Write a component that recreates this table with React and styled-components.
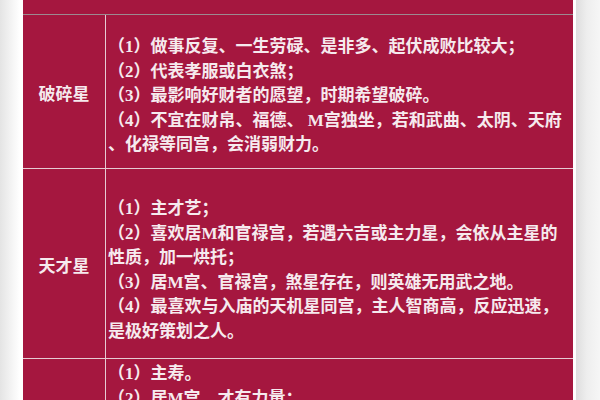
import React from 'react';
import styled, { createGlobalStyle } from 'styled-components';

const rows = [
  {
    name: '破碎星',
    height: 153,
    padTop: 20,
    lines: [
      '（1）做事反复、一生劳碌、是非多、起伏成败比较大；',
      '（2）代表孝服或白衣煞；',
      '（3）最影响好财者的愿望，时期希望破碎。',
      '（4）不宜在财帛、福德、 M宫独坐，若和武曲、太阴、天府',
      '、化禄等同宫，会消弱财力。',
    ],
  },
  {
    name: '天才星',
    height: 189,
    padTop: 28,
    lines: [
      '（1）主才艺；',
      '（2）喜欢居M和官禄宫，若遇六吉或主力星，会依从主星的',
      '性质，加一烘托；',
      '（3）居M宫、官禄宫，煞星存在，则英雄无用武之地。',
      '（4）最喜欢与入庙的天机星同宫，主人智商高，反应迅速，',
      '是极好策划之人。',
    ],
  },
  {
    name: '',
    height: 60,
    padTop: 3,
    lines: ['（1）主寿。', '（2）居M宫，才有力量；'],
  },
];

const App = () => (
  <>
    <GlobalStyle />
    <Page>
      <LeftShade />
      <Table>
        <TopBand />
        {rows.map((row) => (
          <Row key={row.lines[0]} $height={row.height}>
            <Label>{row.name}</Label>
            <Content $padTop={row.padTop}>
              {row.lines.map((line) => (
                <Line key={line}>{line}</Line>
              ))}
            </Content>
          </Row>
        ))}
      </Table>
      <RightShade />
    </Page>
  </>
);

export default App;

const GlobalStyle = createGlobalStyle`
  html, body {
    margin: 0;
    padding: 0;
    background: #ffffff;
  }
`;

const Page = styled.div`
  width: 600px;
  height: 400px;
  overflow: hidden;
  display: flex;
  font-family: "Liberation Serif", "Noto Sans CJK SC", serif;
  font-weight: 700;
  font-size: 17px;
  color: #f6eaee;
`;

const LeftShade = styled.div`
  width: 23px;
  flex-shrink: 0;
  background: linear-gradient(to right, #e4e4e4 0%, #f4f4f4 50%, #ffffff 85%);
`;

const RightShade = styled.div`
  width: 27px;
  flex-shrink: 0;
  border-left: 3px solid #ffffff;
  background: linear-gradient(to right, #dedede 0%, #eeeeee 40%, #f8f8f8 100%);
`;

const Table = styled.div`
  width: 550px;
  flex-shrink: 0;
  display: flex;
  flex-direction: column;
  background: #a5173f;
`;

const TopBand = styled.div`
  height: 14px;
  flex-shrink: 0;
  border-bottom: 1px solid #9c8a90;
`;

const Row = styled.div`
  display: grid;
  grid-template-columns: 83px 1fr;
  height: ${(p) => p.$height}px;
  flex-shrink: 0;
  border-bottom: 1px solid #e6cbd3;
`;

const Label = styled.div`
  display: flex;
  align-items: center;
  justify-content: center;
  padding-top: 2px;
  border-right: 1px solid #e6cbd3;
`;

const Content = styled.div`
  padding: ${(p) => p.$padTop}px 0 0 2px;
`;

const Line = styled.div`
  line-height: 24.5px;
  white-space: nowrap;
`;
